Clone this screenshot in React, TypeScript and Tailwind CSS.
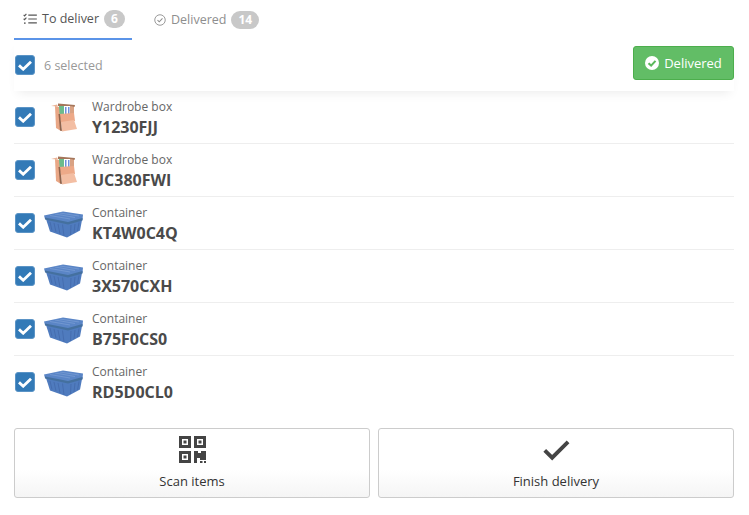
import React from "react";

const items = [
  { kind: "Wardrobe box", code: "Y1230FJJ" },
  { kind: "Wardrobe box", code: "UC380FWI" },
  { kind: "Container", code: "KT4W0C4Q" },
  { kind: "Container", code: "3X570CXH" },
  { kind: "Container", code: "B75F0CS0" },
  { kind: "Container", code: "RD5D0CL0" },
];

const Checkbox = () => (
  <div className="flex h-5 w-5 shrink-0 items-center justify-center rounded-[3px] bg-[#337ab7] border border-[#5b94c6]">
    <svg viewBox="0 0 14 11" className="h-[11px] w-[14px]" fill="none">
      <path d="M1 5.400 5.200 9.200 13 1.700" stroke="#fff" strokeWidth="2.800" />
    </svg>
  </div>
);

const WardrobeBox = () => (
  <svg viewBox="0 0 27 29" className="h-[29px] w-[27px]">
    <path d="M1 3 7 1.500 8 3.500Z" fill="#eab295" />
    <path d="M8 0.500 25 2 24.500 4 8 3Z" fill="#a5765a" />
    <path d="M9 3 20 3 20 11 9 11Z" fill="#fff" />
    <path d="M9 3 14 3 14 11 9 11Z" fill="#6cbb8c" />
    <path d="M15 4h1.500v7H15zM18 4h1.500v7H18z" fill="#6f90dc" />
    <path d="M20 3 24 4 24 11 20 11Z" fill="#d9a283" />
    <path d="M5 3 9 4 11 28 6 25Z" fill="#e9a786" />
    <path d="M9 11 24 10 25 18 11 20Z" fill="#eda988" />
    <path d="M11 19 24 17 27 26 12 28.500Z" fill="#f3bea3" />
    <path d="M8.500 11 10 11 12 28 10 27.500Z" fill="#8f634b" />
  </svg>
);

const ContainerBox = () => (
  <svg viewBox="0 0 40 27" className="h-[27px] w-[40px]">
    <path d="M2 8 38 9 36 19.500 23 26.500 6 20.500Z" fill="#4f7bbe" />
    <path d="M0 4.500 19 0.500 39 3.500 38.500 9 24 13 1 8Z" fill="#5a85c6" />
    <path d="M1 6.500 24 11 38.500 7 38.500 9.500 24 13.500 1 8.500Z" fill="#44709f" />
    <path d="M6 4.500 26 8M11 3 31 6.500M16 2 35 5" stroke="#7b9fd6" strokeWidth="0.700" />
    <path
      d="M6 11 8 19.500M10 12 12 21M14 13 16 23M18.500 13.500 20 25M27 14 26.500 24M31 13 30 22M35 11.500 33.500 20"
      stroke="#4269ab"
      strokeWidth="0.800"
    />
  </svg>
);

const ListCheckIcon = () => (
  <svg viewBox="0 0 16 14" className="h-[12px] w-[14px]" fill="none" stroke="#555" strokeWidth="1.300">
    <path d="M6 2.500h10M6 7h10M6 11.500h10" />
    <path d="M.6 2.200 1.700 3.300 3.800 1M.6 6.700 1.700 7.800 3.800 5.500" />
    <circle cx="2" cy="11.700" r="1" fill="#555" stroke="none" />
  </svg>
);

const CircleCheckOutline = () => (
  <svg viewBox="0 0 16 16" className="h-3 w-3" fill="none" stroke="#8e8e8e" strokeWidth="1.200">
    <circle cx="8" cy="8" r="7" />
    <path d="M4.700 8.200 7 10.400 11.300 5.900" strokeWidth="1.400" />
  </svg>
);

const CircleCheckSolid = () => (
  <svg viewBox="0 0 16 16" className="h-[14px] w-[14px]">
    <circle cx="8" cy="8" r="8" fill="#fff" />
    <path d="M4 8.200 7 11 12 5.600" fill="none" stroke="#5cb85c" strokeWidth="2.400" />
  </svg>
);

const QrIcon = () => (
  <svg viewBox="0 0 27 27" className="h-[27px] w-[27px]" fill="#444">
    <path fillRule="evenodd" d="M0 0h12v12H0zM3 3v6h6V3zM15 0h12v12H15zM18 3v6h6V3zM0 15h12v12H0zM3 18v6h6v-6z" />
    <path d="M4.500 4.500h3v3h-3zM19.500 4.500h3v3h-3zM4.500 19.500h3v3h-3z" />
    <path d="M15 15h4v2h3v-2h5v9h-6v-2h-3v5h-3z" />
    <path d="M21 25h2.500v2H21zM25 25h2v2h-2z" />
  </svg>
);

const CheckIcon = () => (
  <svg viewBox="0 0 28 22" className="h-[22px] w-[27px]" fill="none">
    <path d="M1.800 11.500 9.500 19 26 2.500" stroke="#444" strokeWidth="4" />
  </svg>
);

const Badge = ({ children }: { children: React.ReactNode }) => (
  <span className="rounded-full bg-[#c8c8c8] px-[7px] text-[12px] font-bold leading-[18px] text-white">{children}</span>
);

export default function App() {
  return (
    <div className="h-[515px] w-[749px] overflow-hidden bg-white pl-[14px] pr-[15px] font-['Open_Sans',sans-serif]">
      <div className="flex h-10 items-start">
        <div className="flex h-10 w-[118px] items-center gap-[5px] border-b-2 border-[#5b94e8] pl-[9px] text-[12.5px] text-[#555]">
          <ListCheckIcon />
          <span className="mt-[1px]">To deliver</span>
          <Badge>6</Badge>
        </div>
        <div className="ml-[22px] flex h-10 items-center gap-[5px] text-[12.5px] text-[#8e8e8e]">
          <CircleCheckOutline />
          <span>Delivered</span>
          <Badge>14</Badge>
        </div>
      </div>

      <div className="flex h-[51px] items-start justify-between shadow-[0_6px_10px_-4px_rgba(0,0,0,0.08)]">
        <div className="flex h-[50px] items-center gap-[9px] pl-[1px]">
          <Checkbox />
          <span className="mt-[2px] text-[12.5px] text-[#999]">6 selected</span>
        </div>
        <div className="mt-[6px] flex h-[34px] w-[101px] items-center justify-center gap-[5px] rounded-[3px] border border-[#4cae4c] bg-[#62bd66] text-[13px] text-white">
          <CircleCheckSolid />
          <span className="mt-[1px]">Delivered</span>
        </div>
      </div>

      <div>
        {items.map((item) => (
          <div key={item.code} className="flex h-[53px] items-center border-b border-[#eeeeee] last:border-b-transparent">
            <div className="pl-[1px]">
              <Checkbox />
            </div>
            <div className="ml-[9px] flex w-[48px] shrink-0 justify-start">
              {item.kind === "Container" ? (
                <div className="mt-[2px]">
                  <ContainerBox />
                </div>
              ) : (
                <div className="ml-[6px]">
                  <WardrobeBox />
                </div>
              )}
            </div>
            <div className="mt-[1px]">
              <div className="mt-[1px] text-[12px] leading-[16px] text-[#666]">{item.kind}</div>
              <div className="mt-[1px] text-[16px] font-bold leading-[22px] text-[#4a4a4a]">{item.code}</div>
            </div>
          </div>
        ))}
      </div>

      <div className="mt-[19px] grid grid-cols-2 gap-2">
        <button className="flex h-[70px] flex-col items-center rounded-[3px] border border-[#cccccc] bg-gradient-to-b from-white from-60% to-[#f5f5f5] pt-[7px] text-[13px] text-[#333]">
          <QrIcon />
          <span className="mt-[9px] leading-[18px]">Scan items</span>
        </button>
        <button className="flex h-[70px] flex-col items-center rounded-[3px] border border-[#cccccc] bg-gradient-to-b from-white from-60% to-[#f5f5f5] pt-[7px] text-[13px] text-[#333]">
          <span className="flex h-[27px] items-center">
            <CheckIcon />
          </span>
          <span className="mt-[9px] leading-[18px]">Finish delivery</span>
        </button>
      </div>
    </div>
  );
}
